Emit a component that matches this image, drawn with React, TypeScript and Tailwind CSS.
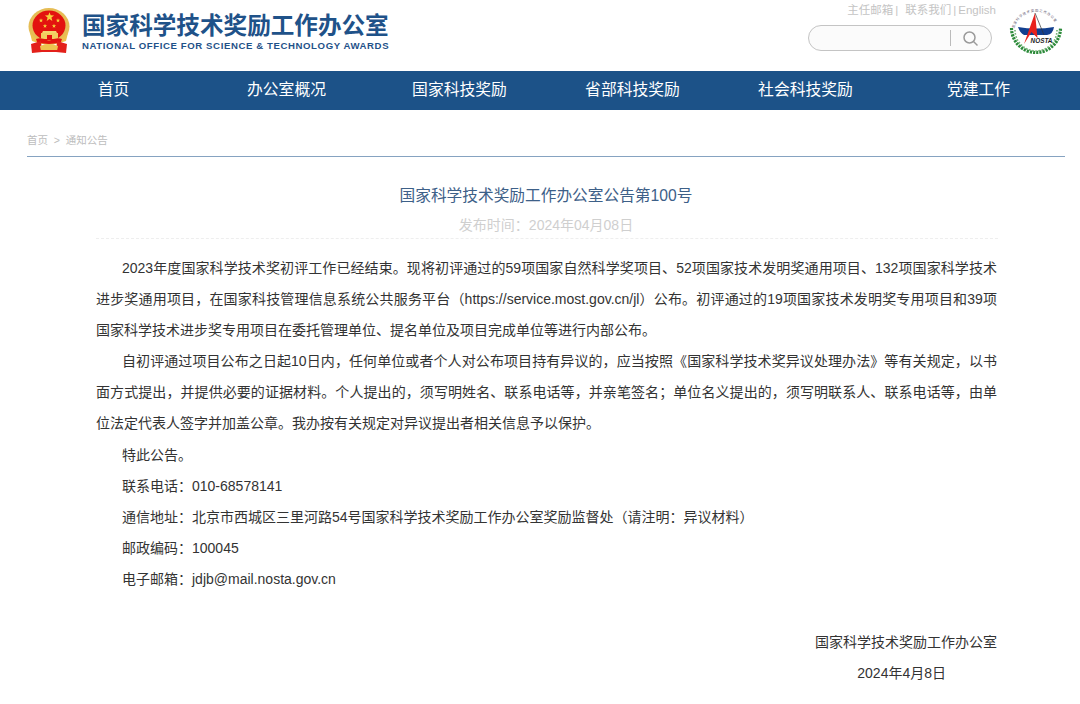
const F = "font-['Liberation_Sans','Noto_Sans_CJK_SC',sans-serif]";

function star(cx: number, cy: number, r: number) {
  const pts: string[] = [];
  for (let i = 0; i < 10; i++) {
    const a = -Math.PI / 2 + (i * Math.PI) / 5;
    const rr = i % 2 === 0 ? r : r * 0.42;
    pts.push(`${(cx + rr * Math.cos(a)).toFixed(2)},${(cy + rr * Math.sin(a)).toFixed(2)}`);
  }
  return pts.join(" ");
}

function Emblem() {
  return (
    <svg width="42" height="46" viewBox="0 0 42 46" className="block">
      <ellipse cx="21" cy="18.5" rx="20.5" ry="18.5" fill="#e6bd55" />
      <ellipse cx="21" cy="17.5" rx="16.5" ry="15" fill="#e3130f" />
      <polygon points={star(21.5, 9, 4.8)} fill="#f7d23c" />
      <polygon points={star(13, 12.5, 2.2)} fill="#f7d23c" />
      <polygon points={star(30, 12.5, 2.2)} fill="#f7d23c" />
      <polygon points={star(17, 18, 2.2)} fill="#f7d23c" />
      <polygon points={star(26, 18, 2.2)} fill="#f7d23c" />
      <path d="M15 23 h13 l1 2 h-15 Z" fill="#f3d56d" />
      <rect x="13" y="25" width="17" height="6" fill="#f2cf60" />
      <rect x="19" y="27" width="5" height="4" fill="#e3130f" />
      <path d="M2 25 Q21 45 40 25 L38 33 Q21 40 4 33 Z" fill="#eec24e" />
      <path d="M8 31 Q14 29 21 33 Q28 29 34 31 L33 34 Q21 38 9 34 Z" fill="#e3130f" />
      <path d="M3 36 L13 33 L14 44 L4 45 Z" fill="#e3201a" />
      <path d="M39 36 L29 33 L28 44 L38 45 Z" fill="#e3201a" />
      <path d="M12 38 Q21 34 30 38 L29 43 L13 43 Z" fill="#eec24e" />
      <path d="M10 42 h22 v2 h-22 Z" fill="#e3201a" />
    </svg>
  );
}

function Nosta() {
  return (
    <svg width="54" height="50" viewBox="0 0 54 50" className="block overflow-visible">
      <defs>
        <path id="nostaArc" d="M5 22.5 A22.5 22.5 0 0 1 49 22.5" />
      </defs>
      <text fontSize="3.4" fill="#6b6478" fontFamily="Noto Sans CJK SC">
        <textPath href="#nostaArc" textLength="52" startOffset="1">国家科学技术奖励工作办公室</textPath>
      </text>
      <path d="M2.5 21 A24.5 24.5 0 0 0 51.5 21" fill="none" stroke="#2c8a3a" strokeWidth="3.2" strokeDasharray="2.2 1" />
      <path d="M6 23 A21 21 0 0 0 48 23" fill="none" stroke="#6fb070" strokeWidth="1.6" strokeDasharray="1.6 1.6" />
      <path d="M9 20 Q27 23 45 20 Q44 27 38 28 L15 28 Q11 26 9 20 Z" fill="#123f8f" />
      <path d="M26 6 L28.5 31 L22.5 25 L15 37 Z" fill="#e8211d" />
      <path d="M26 6 L35 28" stroke="#333" strokeWidth="0.7" fill="none" />
      <text x="32.5" y="36" textAnchor="middle" fontSize="6.4" fontWeight="700" fontStyle="italic" fill="#1c1c1c" fontFamily="Liberation Sans">NOSTA</text>
    </svg>
  );
}

const nav = ["首页", "办公室概况", "国家科技奖励", "省部科技奖励", "社会科技奖励", "党建工作"];

const paras = [
  "2023年度国家科学技术奖初评工作已经结束。现将初评通过的59项国家自然科学奖项目、52项国家技术发明奖通用项目、132项国家科学技术进步奖通用项目，在国家科技管理信息系统公共服务平台（https://service.most.gov.cn/jl）公布。初评通过的19项国家技术发明奖专用项目和39项国家科学技术进步奖专用项目在委托管理单位、提名单位及项目完成单位等进行内部公布。",
  "自初评通过项目公布之日起10日内，任何单位或者个人对公布项目持有异议的，应当按照《国家科学技术奖异议处理办法》等有关规定，以书面方式提出，并提供必要的证据材料。个人提出的，须写明姓名、联系电话等，并亲笔签名；单位名义提出的，须写明联系人、联系电话等，由单位法定代表人签字并加盖公章。我办按有关规定对异议提出者相关信息予以保护。",
  "特此公告。",
  "联系电话：010-68578141",
  "通信地址：北京市西城区三里河路54号国家科学技术奖励工作办公室奖励监督处（请注明：异议材料）",
  "邮政编码：100045",
  "电子邮箱：jdjb@mail.nosta.gov.cn",
];

export default function App() {
  return (
    <div className={`${F} w-[1080px] h-[704px] overflow-hidden bg-white`}>
      <header className="h-[71px] flex justify-between pl-[28px] pr-[17px]">
        <div className="flex pt-[8px]">
          <Emblem />
          <div className="ml-[12px] pt-[5px]">
            <div className="text-[23.6px] leading-[27px] font-bold text-[#1f5289] whitespace-nowrap">国家科学技术奖励工作办公室</div>
            <div className="text-[9.6px] leading-[12px] font-bold text-[#1f5289] whitespace-nowrap tracking-[0.6px]">NATIONAL OFFICE FOR SCIENCE &amp; TECHNOLOGY AWARDS</div>
          </div>
        </div>
        <div className="flex">
          <div className="flex flex-col items-end">
            <div className="flex text-[11.5px] leading-[14px] text-[#c4c4c4] pt-[3px] -mr-[4px] whitespace-nowrap">
              <span>主任邮箱</span>
              <span className="ml-[2px]">|</span>
              <span className="ml-[7px]">联系我们</span>
              <span className="ml-[2px]">|</span>
              <span className="ml-[2px]">English</span>
            </div>
            <div className="mt-[8px] w-[184px] h-[26px] rounded-full border border-[#c4c4c4] bg-[#fbfbfb] flex items-center justify-end pr-[12px]">
              <span className="w-px h-[16px] bg-[#bbb] mr-[11px]" />
              <svg width="17" height="17" viewBox="0 0 17 17" fill="none" stroke="#9a9a9a" strokeWidth="1.5">
                <circle cx="7.5" cy="7.5" r="5.5" />
                <path d="M11.5 11.5 L15.5 15.5" />
              </svg>
            </div>
          </div>
          <div className="ml-[17px] pt-[7px]"><Nosta /></div>
        </div>
      </header>
      <nav className="h-[39px] bg-[#1c5288] flex pl-[27px]">
        {nav.map((t) => (
          <div key={t} className="w-[173px] text-center text-[15.8px] leading-[38px] text-white whitespace-nowrap">{t}</div>
        ))}
      </nav>
      <div className="ml-[27px] mr-[15px] mt-[23px] h-[24px] border-b border-[#86a3c1] text-[10.5px] leading-[15px] text-[#bdbdbd] whitespace-nowrap">首页 &nbsp;&gt;&nbsp; 通知公告</div>
      <h1 className="mt-[28px] pl-[12px] text-center text-[15.7px] leading-[22px] font-normal text-[#3d6088]">国家科学技术奖励工作办公室公告第100号</h1>
      <div className="mt-[8px] pl-[12px] text-center text-[14px] leading-[20px] text-[#cfcfcf]">发布时间：2024年04月08日</div>
      <div className="ml-[96px] w-[902px] mt-[3px] border-b border-dashed border-[#eeeeee]" />
      <div className="ml-[96px] w-[901px] mt-[14px] text-[14px] leading-[31.1px] text-[#333]">
        {paras.map((p) => (
          <p key={p} className="indent-[26px] text-justify">{p}</p>
        ))}
        <p className="mt-[32px] text-right">国家科学技术奖励工作办公室</p>
        <p className="text-right pr-[51px]">2024年4月8日</p>
      </div>
    </div>
  );
}
